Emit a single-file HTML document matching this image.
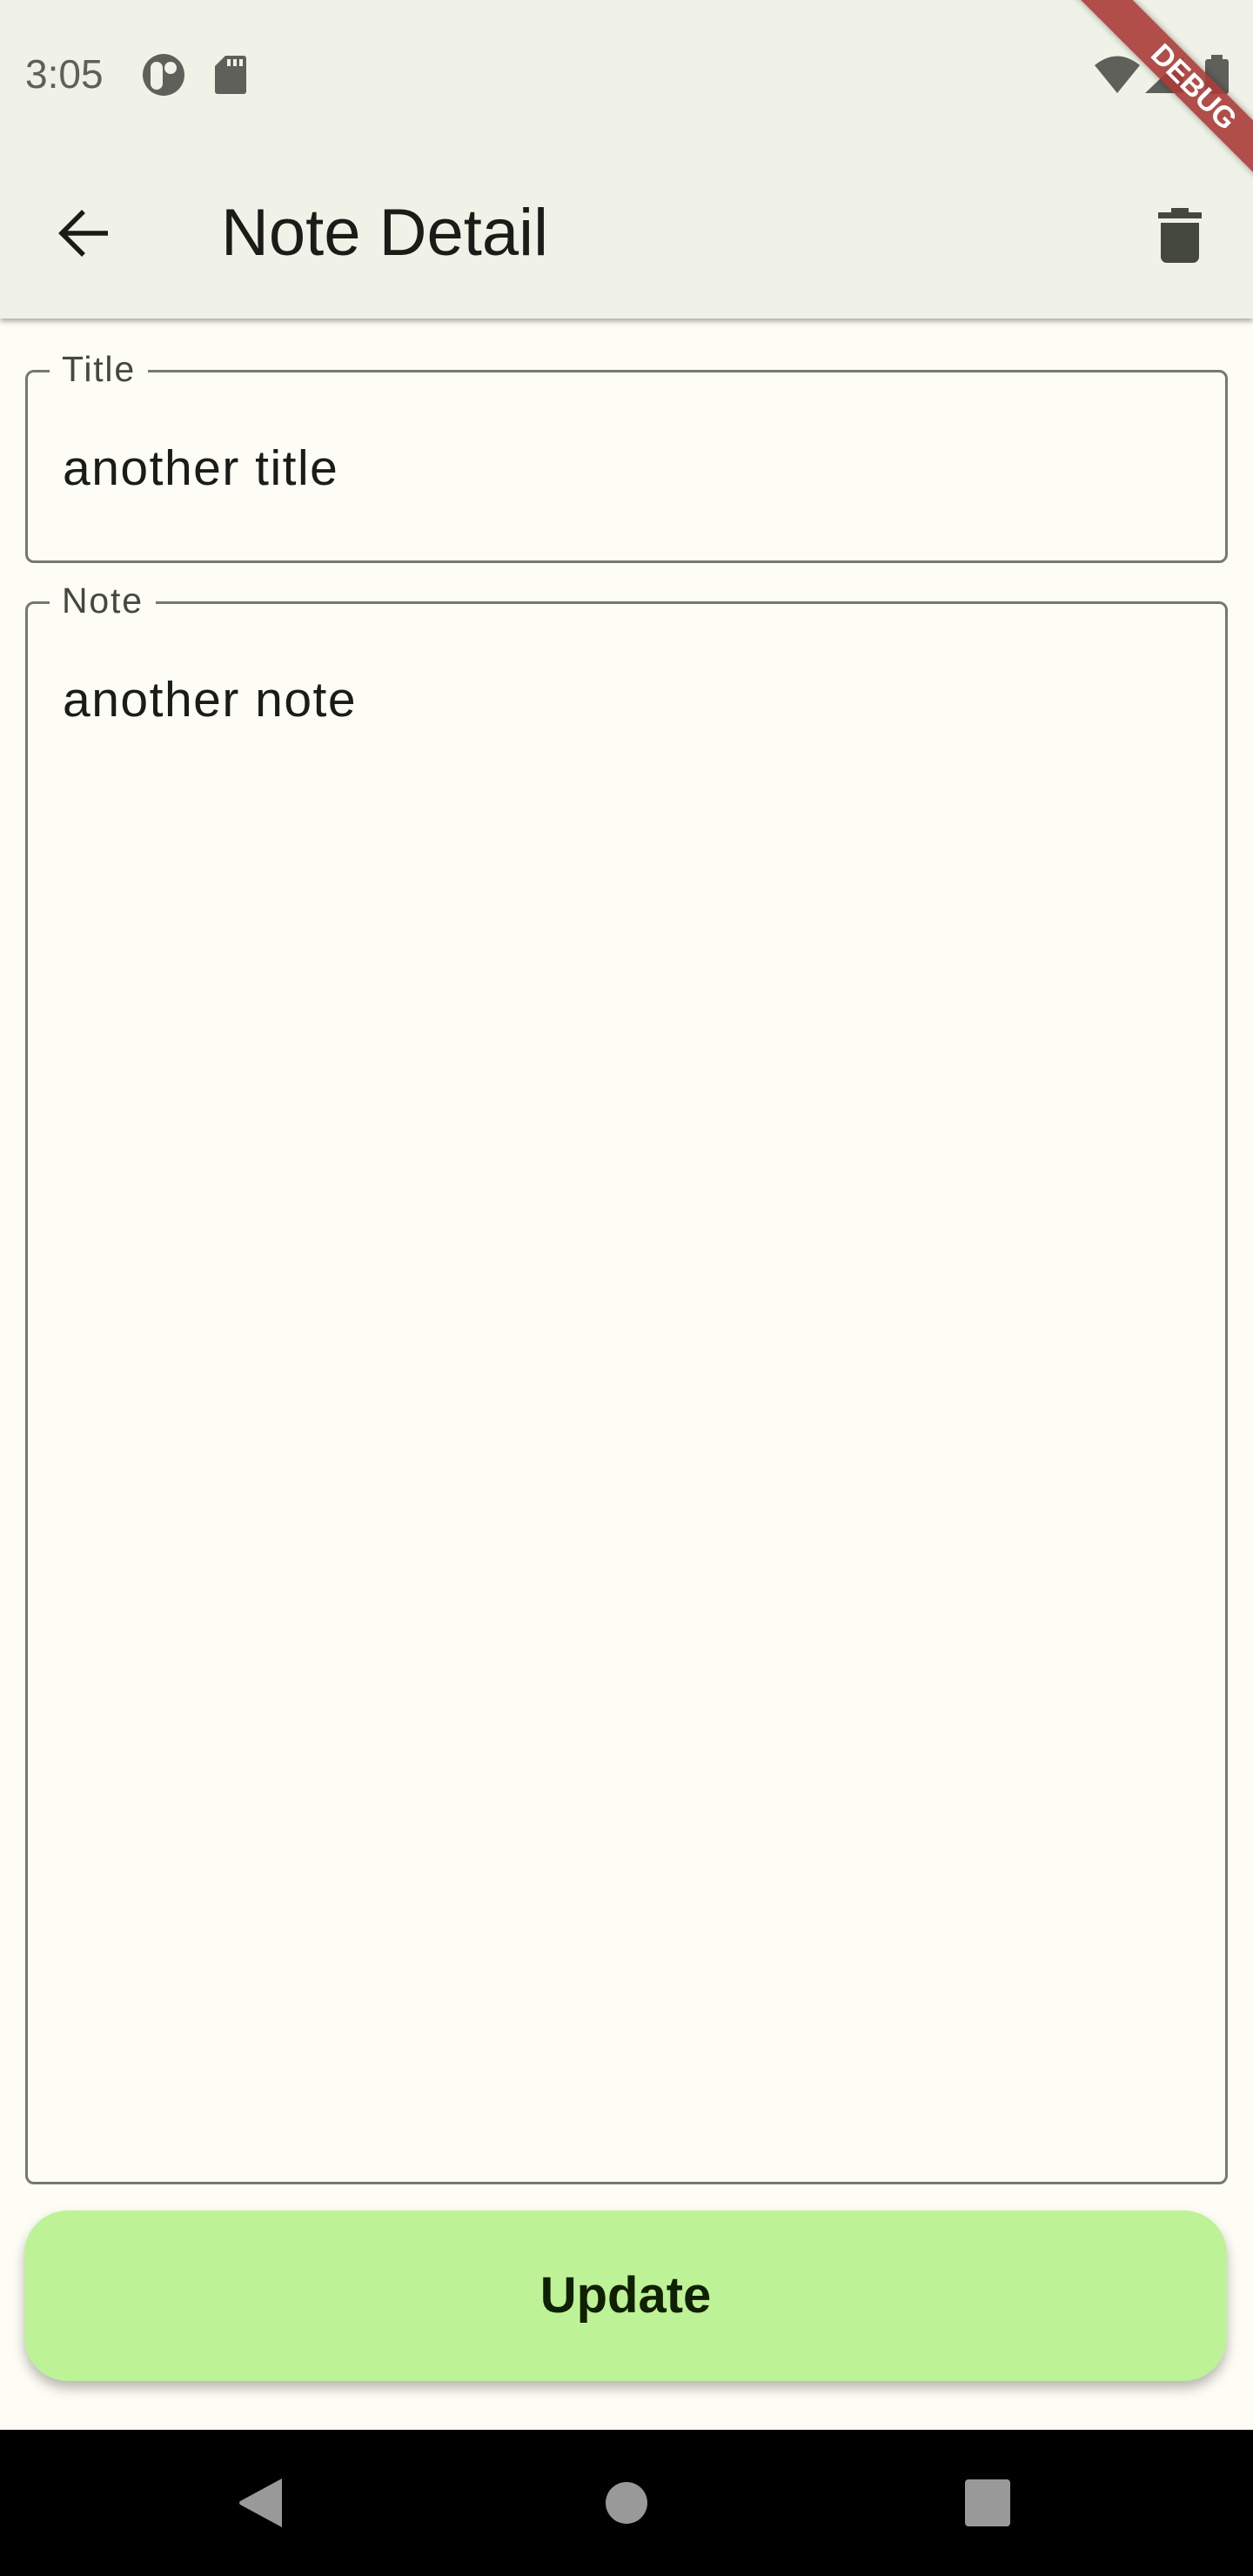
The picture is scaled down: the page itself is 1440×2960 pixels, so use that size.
<!DOCTYPE html>
<html><head><meta charset="utf-8"><style>
*{margin:0;padding:0;box-sizing:border-box}
html,body{width:1440px;height:2960px;overflow:hidden;background:#fdfdf5;font-family:"Liberation Sans",sans-serif;position:relative}
.abs{position:absolute}
#top{left:0;top:0;width:1440px;height:366px;background:#f0f2e7;box-shadow:0 3px 6px rgba(0,0,0,0.35)}
.field{border:3px solid #74796d;border-radius:10px}
.lab{background:#fdfdf5;color:#44483e;font-size:41px;letter-spacing:1.8px;padding:0 14px;line-height:44px}
.txt{color:#1a1c18;font-size:57px;letter-spacing:1.5px}
</style></head><body>
<div id="top" class="abs"></div>
<div class="abs" style="left:29px;top:60px;font-size:46px;color:#5f605a;line-height:50px">3:05</div>
<svg class="abs" style="left:164px;top:62px" width="48" height="48" viewBox="0 0 48 48"><circle cx="24" cy="24" r="24" fill="#5f605a"/><rect x="9" y="9" width="14" height="32" rx="7" fill="#f0f2e7"/><circle cx="32" cy="16" r="7" fill="#f0f2e7"/></svg>
<svg class="abs" style="left:247px;top:64px" width="36" height="44" viewBox="0 0 36 44"><path d="M12 0H33a3 3 0 0 1 3 3V41a3 3 0 0 1-3 3H3a3 3 0 0 1-3-3V12Z" fill="#5f605a"/><rect x="14" y="4" width="4" height="8" fill="#f0f2e7"/><rect x="21" y="4" width="4" height="8" fill="#f0f2e7"/><rect x="28" y="4" width="4" height="8" fill="#f0f2e7"/></svg>
<svg class="abs" style="left:1258px;top:62px" width="160" height="48" viewBox="0 0 160 48"><path d="M0 13Q26 -8 52 13L26 45Z" fill="#5f605a"/><path d="M58 45L102 3V45Z" fill="#5f605a"/><rect x="127" y="6" width="27" height="40" rx="3" fill="#5f605a"/><rect x="134" y="1" width="13" height="6" fill="#5f605a"/></svg>
<div class="abs" style="left:1172px;top:79px;width:400px;height:42px;background:rgba(170,60,55,0.9);transform:rotate(45deg);color:#fff;font-weight:bold;font-size:34px;line-height:42px;text-align:center;box-shadow:0 0 8px rgba(0,0,0,0.4)">DEBUG</div>
<svg class="abs" style="left:66px;top:240px" width="60" height="56" viewBox="0 0 60 56"><path d="M58 28H6M30 3L5 28L30 53" stroke="#1a1c18" stroke-width="5.5" fill="none"/></svg>
<div class="abs" style="left:254px;top:224px;font-size:76px;line-height:88px;color:#1a1c18">Note Detail</div>
<svg class="abs" style="left:1331px;top:239px" width="50" height="63" viewBox="0 0 50 63"><path d="M15 0H35V5H50V12H0V5H15Z" fill="#44483e"/><path d="M3 17H47V56a7 7 0 0 1-7 7H10a7 7 0 0 1-7-7Z" fill="#44483e"/></svg>
<div class="abs field" style="left:29px;top:425px;width:1382px;height:222px"></div>
<div class="abs lab" style="left:57px;top:402px">Title</div>
<div class="abs txt" style="left:72px;top:505px">another title</div>
<div class="abs field" style="left:29px;top:691px;width:1382px;height:1819px"></div>
<div class="abs lab" style="left:57px;top:668px">Note</div>
<div class="abs txt" style="left:72px;top:771px">another note</div>
<div class="abs" style="left:28px;top:2540px;width:1382px;height:196px;background:#bef296;border-radius:50px;box-shadow:0 8px 14px rgba(0,0,0,0.28);text-align:center;line-height:196px;font-size:58px;font-weight:bold;color:#0f2004">Update</div>
<div class="abs" style="left:0;top:2792px;width:1440px;height:168px;background:#000"></div>
<svg class="abs" style="left:274px;top:2847px" width="52" height="58" viewBox="0 0 52 58"><path d="M50 1V57L2 31Q0 29 2 27Z" fill="#999"/></svg>
<div class="abs" style="left:696px;top:2852px;width:48px;height:48px;border-radius:50%;background:#999"></div>
<div class="abs" style="left:1109px;top:2849px;width:52px;height:54px;border-radius:4px;background:#999"></div>
</body></html>
